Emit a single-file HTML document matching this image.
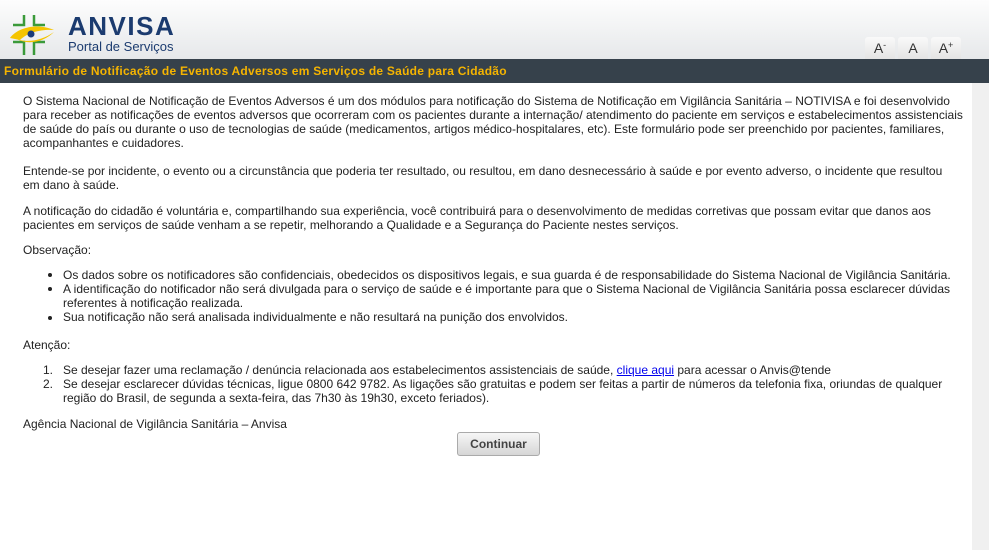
<!DOCTYPE html>
<html><head><meta charset="utf-8"><style>
body{margin:0;width:989px;height:550px;overflow:hidden;background:#fff;font-family:"Liberation Sans",sans-serif;font-size:12px;color:#222;position:relative}
.hdr{position:absolute;left:0;top:0;width:989px;height:59px;background:linear-gradient(#fdfdfd,#e6e8ea)}
.bar{position:absolute;left:0;top:59px;width:989px;height:24px;background:#36414b}
.bar span{position:absolute;left:4px;top:5px;color:#f5b400;font-weight:bold;font-size:12px;letter-spacing:0.25px}
.fb{position:absolute;top:37px;height:22px;background:linear-gradient(#fafafa,#e4e4e4);border-radius:3px 3px 0 0;font-size:14px;text-align:center;line-height:22px;color:#333}
.fb i{font-style:normal;font-size:9px;position:relative;top:-5px}
.scroll{position:absolute;left:972px;top:83px;width:17px;height:467px;background:#f0f0f0}
.t{position:absolute;left:23px;line-height:14px;white-space:nowrap;font-size:12px}
.li{left:63px}
.b{position:absolute;left:48px;width:4px;height:4px;border-radius:50%;background:#222}
.n{position:absolute;left:43px;line-height:14px}
a{color:#00e;text-decoration:underline}
.btn{position:absolute;left:457px;top:432px;width:81px;height:22px;border:1px solid #aaa;border-radius:3px;background:linear-gradient(#f6f6f6,#d6d6d6);text-align:center;line-height:22px;font-weight:bold;font-size:12px;color:#444}
</style></head><body>
<div class="hdr"></div>
<svg style="position:absolute;left:8px;top:14px" width="48" height="42" viewBox="0 0 48 42">
<path d="M16 1v10H5M26 1v10h11M5 28h11v13M37 28H26v13" stroke="#3a9a3a" stroke-width="2.5" fill="none"/>
<path d="M2 24C10 13 30 9 46 16C34 15 20 18 12 26Z" fill="#f5c400"/>
<path d="M4 22C14 30 32 28 46 18C36 28 18 33 4 22Z" fill="#f5c400"/>
<circle cx="23" cy="20" r="3.5" fill="#1a3c7a"/>
</svg>
<div style="position:absolute;left:68px;top:12px;font-weight:bold;font-size:26px;color:#1b3b6f;letter-spacing:1.5px;line-height:28px">ANVISA</div>
<div style="position:absolute;left:68px;top:39px;font-size:13px;color:#1b3b6f">Portal de Serviços</div>
<div class="fb" style="left:865px;width:30px">A<i>-</i></div>
<div class="fb" style="left:898px;width:30px">A</div>
<div class="fb" style="left:931px;width:30px">A<i>+</i></div>
<div class="bar"><span>Formulário de Notificação de Eventos Adversos em Serviços de Saúde para Cidadão</span></div>
<div class="scroll"></div>
<div class="t" style="top:94px">O Sistema Nacional de Notificação de Eventos Adversos é um dos módulos para notificação do Sistema de Notificação em Vigilância Sanitária – NOTIVISA e foi desenvolvido<br>para receber as notificações de eventos adversos que ocorreram com os pacientes durante a internação/ atendimento do paciente em serviços e estabelecimentos assistenciais<br>de saúde do país ou durante o uso de tecnologias de saúde (medicamentos, artigos médico-hospitalares, etc). Este formulário pode ser preenchido por pacientes, familiares,<br>acompanhantes e cuidadores.</div>
<div class="t" style="top:164px">Entende-se por incidente, o evento ou a circunstância que poderia ter resultado, ou resultou, em dano desnecessário à saúde e por evento adverso, o incidente que resultou<br>em dano à saúde.</div>
<div class="t" style="top:204px">A notificação do cidadão é voluntária e, compartilhando sua experiência, você contribuirá para o desenvolvimento de medidas corretivas que possam evitar que danos aos<br>pacientes em serviços de saúde venham a se repetir, melhorando a Qualidade e a Segurança do Paciente nestes serviços.</div>
<div class="t" style="top:243px">Observação:</div>
<div class="b" style="top:273px"></div><div class="b" style="top:287px"></div><div class="b" style="top:316px"></div>
<div class="t li" style="top:268px">Os dados sobre os notificadores são confidenciais, obedecidos os dispositivos legais, e sua guarda é de responsabilidade do Sistema Nacional de Vigilância Sanitária.<br>A identificação do notificador não será divulgada para o serviço de saúde e é importante para que o Sistema Nacional de Vigilância Sanitária possa esclarecer dúvidas<br>referentes à notificação realizada.<br>Sua notificação não será analisada individualmente e não resultará na punição dos envolvidos.</div>
<div class="t" style="top:338px">Atenção:</div>
<div class="n" style="top:363px">1.</div><div class="n" style="top:377px">2.</div>
<div class="t li" style="top:363px">Se desejar fazer uma reclamação / denúncia relacionada aos estabelecimentos assistenciais de saúde, <a>clique aqui</a> para acessar o Anvis@tende<br>Se desejar esclarecer dúvidas técnicas, ligue 0800 642 9782. As ligações são gratuitas e podem ser feitas a partir de números da telefonia fixa, oriundas de qualquer<br>região do Brasil, de segunda a sexta-feira, das 7h30 às 19h30, exceto feriados).</div>
<div class="t" style="top:417px">Agência Nacional de Vigilância Sanitária – Anvisa</div>
<div class="btn">Continuar</div>
</body></html>
